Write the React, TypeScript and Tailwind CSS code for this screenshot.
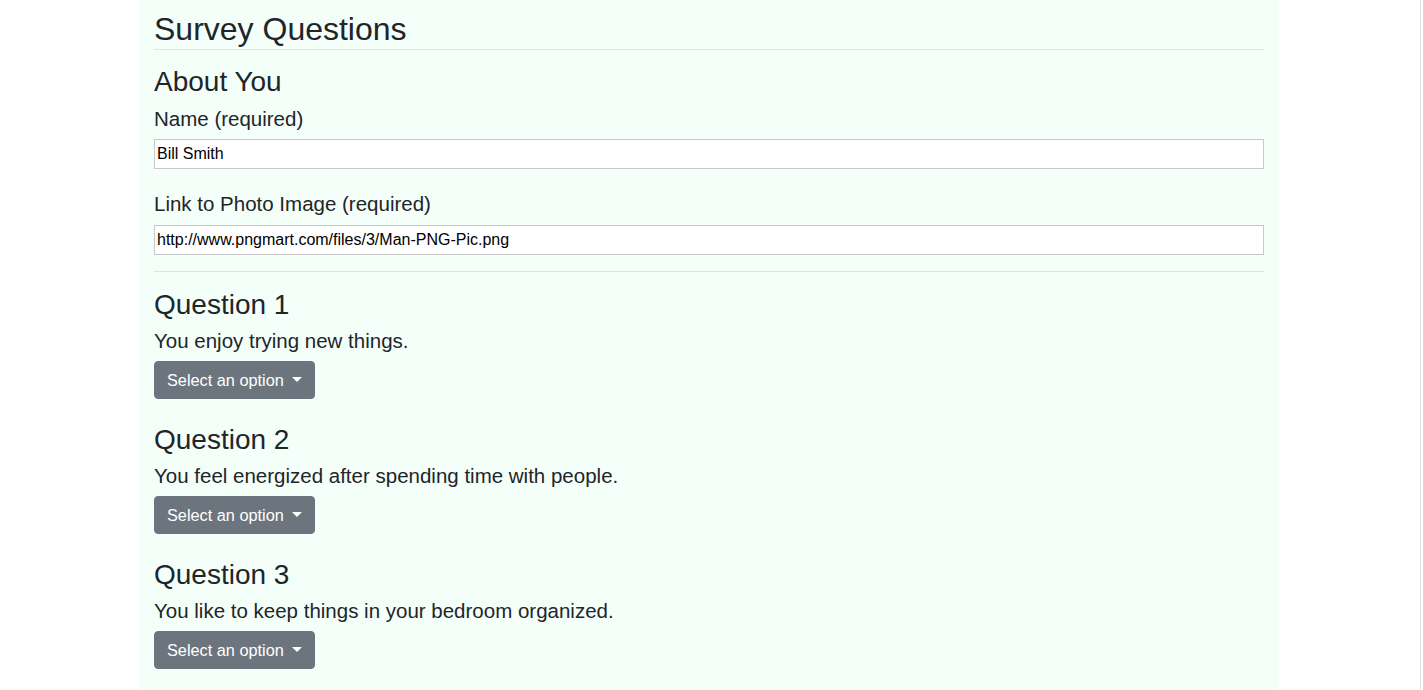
import React from "react";

const questions = [
  "You enjoy trying new things.",
  "You feel energized after spending time with people.",
  "You like to keep things in your bedroom organized.",
];

function SelectButton() {
  return (
    <button
      type="button"
      className="flex h-[38px] items-center rounded bg-[#6c757d] px-[12px] text-[16.3px] leading-6 text-white border border-[#6c757d]"
    >
      <span>Select an option</span>
      <span className="ml-2 mt-[-1px] inline-block h-0 w-0 border-x-[5px] border-t-[5px] border-x-transparent border-t-white" />
    </button>
  );
}

function TextInput({ value }: { value: string }) {
  return (
    <input
      type="text"
      defaultValue={value}
      className="block h-[30px] w-full border border-[#c8c8c8] bg-white px-[2px] text-[16px] text-black outline-none"
    />
  );
}

export default function App() {
  return (
    <div
      className="flex min-h-screen w-[1421px] border-r border-[#e3e3e3] bg-white text-[#212529]"
      style={{ fontFamily: '"Liberation Sans", Arial, sans-serif' }}
    >
      <div className="ml-[139px] w-[1140px] bg-[#f5fffa] px-[15px] pt-[10px] pb-10">
        <h2 className="border-b border-black/10 pb-[1px] text-[32px] leading-[38px] font-medium">
          Survey Questions
        </h2>

        <h3 className="mt-[15px] text-[28px] leading-[34px] font-medium">About You</h3>

        <div className="mt-2">
          <label className="mb-[8px] block text-[20.5px] leading-6">Name (required)</label>
          <TextInput value="Bill Smith" />
        </div>

        <div className="mt-[23px]">
          <label className="mb-[9px] block text-[20.5px] leading-6">
            Link to Photo Image (required)
          </label>
          <TextInput value="http://www.pngmart.com/files/3/Man-PNG-Pic.png" />
        </div>

        <hr className="mt-4 border-0 border-t border-black/10" />

        <div className="mt-[16px] flex flex-col gap-[24px]">
          {questions.map((q, i) => (
            <div key={i}>
              <h3 className="text-[28px] leading-[34px] font-medium">Question {i + 1}</h3>
              <p className="mt-[6.5px] text-[20.5px] leading-6">{q}</p>
              <div className="mt-[8.5px]">
                <SelectButton />
              </div>
            </div>
          ))}
        </div>
      </div>
    </div>
  );
}
